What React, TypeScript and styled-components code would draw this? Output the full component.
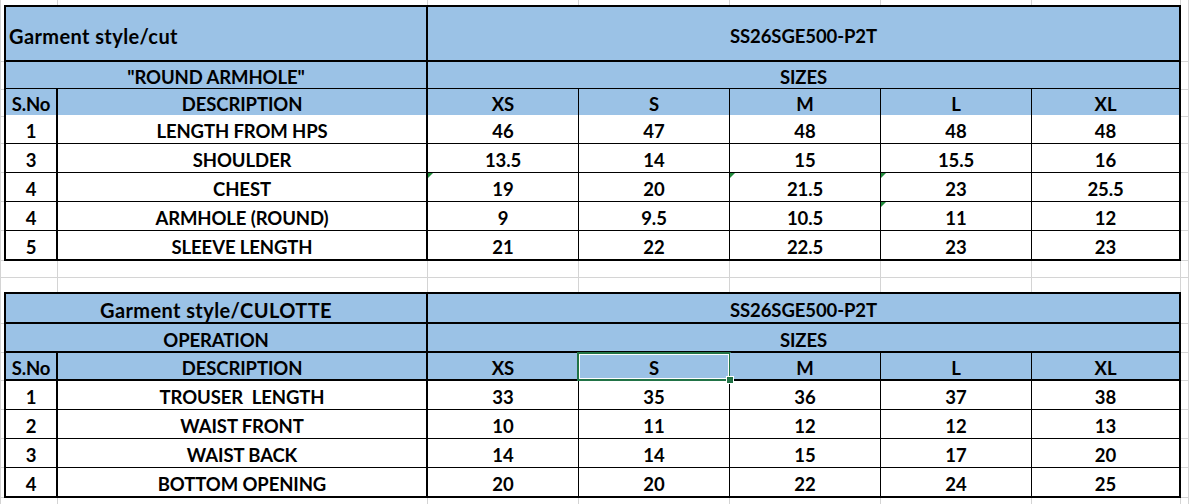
import styled, { createGlobalStyle } from "styled-components";

const GlobalStyle = createGlobalStyle`
  html, body {
    margin: 0;
    padding: 0;
    background: #fff;
  }
  body {
    font-family: Lato, "Open Sans", sans-serif;
  }
`;

const COLS = "4px 54px 370px 151px 151px 151px 151px 149px 8px";
const GRID = "#d4d4d4";

const Sheet = styled.div`
  width: 1189px;
  height: 504px;
  overflow: hidden;
  display: flex;
  flex-direction: column;
`;

const Row = styled.div<{ $h: number }>`
  display: grid;
  grid-template-columns: ${COLS};
  height: ${(p) => p.$h}px;
  flex: none;
`;

const Edge = styled.div<{ $side: "left" | "right"; $noBottom?: boolean }>`
  box-sizing: border-box;
  border-bottom: ${(p) => (p.$noBottom ? "0" : `1px solid ${GRID}`)};
  ${(p) =>
    p.$side === "left"
      ? `border-left: 1px solid ${GRID};`
      : `border-right: 1px solid ${GRID};`}
`;

const Blank = styled.div<{ $noBottom?: boolean }>`
  box-sizing: border-box;
  border-right: 1px solid ${GRID};
  border-bottom: ${(p) => (p.$noBottom ? "0" : `1px solid ${GRID}`)};
`;

type CellProps = {
  $span?: number;
  $fill?: boolean;
  $t?: number;
  $l?: number;
  $r?: number;
  $b?: number;
  $left?: boolean;
  $title?: boolean;
  $flag?: boolean;
  $selected?: boolean;
};

const Cell = styled.div<CellProps>`
  position: relative;
  box-sizing: border-box;
  grid-column: span ${(p) => p.$span ?? 1};
  background: ${(p) => (p.$fill ? "#9bc2e6" : "#fff")};
  border-style: solid;
  border-color: #000;
  border-width: ${(p) => p.$t ?? 0}px ${(p) => p.$r ?? 1}px
    ${(p) => p.$b ?? 1}px ${(p) => p.$l ?? 0}px;
  display: flex;
  align-items: center;
  justify-content: ${(p) => (p.$left ? "flex-start" : "center")};
  padding: 4px 3px 0;
  font-size: ${(p) => (p.$title ? "20px" : "18.5px")};
  font-weight: 700;
  letter-spacing: ${(p) => (p.$title ? "0.4px" : "-0.1px")};
  color: #000;
  white-space: pre;

  ${(p) =>
    p.$flag &&
    `
    &::before {
      content: "";
      position: absolute;
      top: 0;
      left: 0;
      border-top: 5px solid #1f8a3a;
      border-right: 5px solid transparent;
    }
  `}

  ${(p) =>
    p.$selected &&
    `
    &::after {
      content: "";
      position: absolute;
      top: -1px;
      left: -2px;
      right: -2px;
      bottom: -2px;
      border: 2px solid #217346;
      box-shadow: inset 0 0 0 1px #fff;
    }
  `}
`;

const FillHandle = styled.span`
  position: absolute;
  right: -5px;
  bottom: -5px;
  width: 6px;
  height: 6px;
  background: #217346;
  border: 1px solid #fff;
  z-index: 2;
`;

type SpecRow = { no: string; desc: string; values: string[]; flags?: number[] };

type TableProps = {
  title: string;
  titleLeft?: boolean;
  subtitle: string;
  code: string;
  heights: [number, number, number];
  rowHeight: number;
  rows: SpecRow[];
  selectedSize?: number;
};

const SIZES = ["XS", "S", "M", "L", "XL"];

function StripRow({ h, noBottom }: { h: number; noBottom?: boolean }) {
  return (
    <Row $h={h}>
      <Edge $side="left" $noBottom={noBottom} />
      {Array.from({ length: 7 }).map((_, i) => (
        <Blank key={i} $noBottom={noBottom} />
      ))}
      <Edge $side="right" $noBottom={noBottom} />
    </Row>
  );
}

function SizeTable({
  title,
  titleLeft,
  subtitle,
  code,
  heights,
  rowHeight,
  rows,
  selectedSize,
}: TableProps) {
  return (
    <>
      <Row $h={heights[0]}>
        <Edge $side="left" />
        <Cell $span={2} $fill $title $left={titleLeft} $t={2} $l={2} $r={2} $b={2}>
          {title}
        </Cell>
        <Cell $span={5} $fill $t={2} $r={2} $b={2}>
          {code}
        </Cell>
        <Edge $side="right" />
      </Row>
      <Row $h={heights[1]}>
        <Edge $side="left" />
        <Cell $span={2} $fill $l={2} $r={2} $b={2}>
          {subtitle}
        </Cell>
        <Cell $span={5} $fill $r={2} $b={2}>
          SIZES
        </Cell>
        <Edge $side="right" />
      </Row>
      <Row $h={heights[2]}>
        <Edge $side="left" />
        <Cell $fill $l={2} $r={2} $b={2}>
          S.No
        </Cell>
        <Cell $fill $r={2} $b={2}>
          DESCRIPTION
        </Cell>
        {SIZES.map((s, i) => (
          <Cell
            key={s}
            $fill
            $r={i === SIZES.length - 1 ? 2 : 1}
            $b={2}
            $selected={selectedSize === i}
          >
            {s}
            {selectedSize === i && <FillHandle />}
          </Cell>
        ))}
        <Edge $side="right" />
      </Row>
      {rows.map((r, ri) => {
        const last = ri === rows.length - 1;
        return (
          <Row key={ri} $h={last ? rowHeight + 1 : rowHeight}>
            <Edge $side="left" />
            <Cell $l={2} $r={2} $b={last ? 2 : 1}>
              {r.no}
            </Cell>
            <Cell $r={2} $b={last ? 2 : 1}>
              {r.desc}
            </Cell>
            {r.values.map((v, vi) => (
              <Cell
                key={vi}
                $r={vi === r.values.length - 1 ? 2 : 1}
                $b={last ? 2 : 1}
                $flag={r.flags?.includes(vi)}
              >
                {v}
              </Cell>
            ))}
            <Edge $side="right" />
          </Row>
        );
      })}
    </>
  );
}

const topRows: SpecRow[] = [
  { no: "1", desc: "LENGTH FROM HPS", values: ["46", "47", "48", "48", "48"] },
  { no: "3", desc: "SHOULDER", values: ["13.5", "14", "15", "15.5", "16"] },
  { no: "4", desc: "CHEST", values: ["19", "20", "21.5", "23", "25.5"], flags: [0, 2, 3] },
  { no: "4", desc: "ARMHOLE (ROUND)", values: ["9", "9.5", "10.5", "11", "12"], flags: [3] },
  { no: "5", desc: "SLEEVE LENGTH", values: ["21", "22", "22.5", "23", "23"] },
];

const bottomRows: SpecRow[] = [
  { no: "1", desc: "TROUSER  LENGTH", values: ["33", "35", "36", "37", "38"] },
  { no: "2", desc: "WAIST FRONT", values: ["10", "11", "12", "12", "13"] },
  { no: "3", desc: "WAIST BACK", values: ["14", "14", "15", "17", "20"] },
  { no: "4", desc: "BOTTOM OPENING", values: ["20", "20", "22", "24", "25"] },
];

export default function App() {
  return (
    <>
      <GlobalStyle />
      <Sheet>
        <StripRow h={5} noBottom />
        <SizeTable
          title="Garment style/cut"
          titleLeft
          subtitle={'"ROUND ARMHOLE"'}
          code="SS26SGE500-P2T"
          heights={[57, 27, 26]}
          rowHeight={29}
          rows={topRows}
        />
        <StripRow h={17} />
        <StripRow h={14} noBottom />
        <SizeTable
          title="Garment style/CULOTTE"
          subtitle="OPERATION"
          code="SS26SGE500-P2T"
          heights={[32, 29, 28]}
          rowHeight={29}
          rows={bottomRows}
          selectedSize={1}
        />
        <StripRow h={8} />
      </Sheet>
    </>
  );
}
